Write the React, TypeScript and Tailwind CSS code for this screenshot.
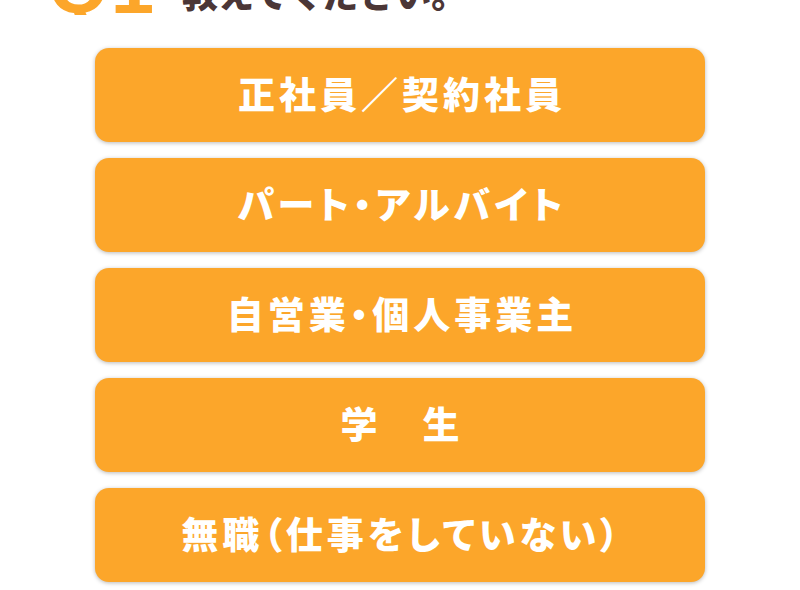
import React from "react";

const options = [
  "正社員／契約社員",
  "パート・アルバイト",
  "自営業・個人事業主",
  "学　生",
  "無職（仕事をしていない）",
];

export default function App() {
  return (
    <div className="w-[800px] h-[590px] bg-white overflow-hidden font-['Noto_Sans_CJK_JP',sans-serif]">
      <div className="h-[15px] overflow-hidden flex flex-col justify-end">
        <div className="flex items-end pl-[48px] gap-[26px] leading-none">
          <span className="font-['Liberation_Sans',sans-serif] font-bold text-[78px] text-[#fca62a] leading-[0.72] tracking-[2px] mb-[1px]">
            Q1
          </span>
          <span className="font-black text-[36px] text-[#4b3636] leading-none mb-[5px]">
            教えてください。
          </span>
        </div>
      </div>
      <div className="flex flex-col items-center gap-[16px] pt-[33px]">
        {options.map((o) => (
          <div
            key={o}
            className="w-[610px] h-[94px] rounded-[14px] bg-[#fca62a] shadow-[0_1px_4px_rgba(0,0,0,0.28)] flex items-center justify-center"
          >
            <span className="text-white font-black text-[37px] tracking-[4px] [font-feature-settings:'palt'] leading-none pl-[4px] mb-[3px]">
              {o}
            </span>
          </div>
        ))}
      </div>
    </div>
  );
}
